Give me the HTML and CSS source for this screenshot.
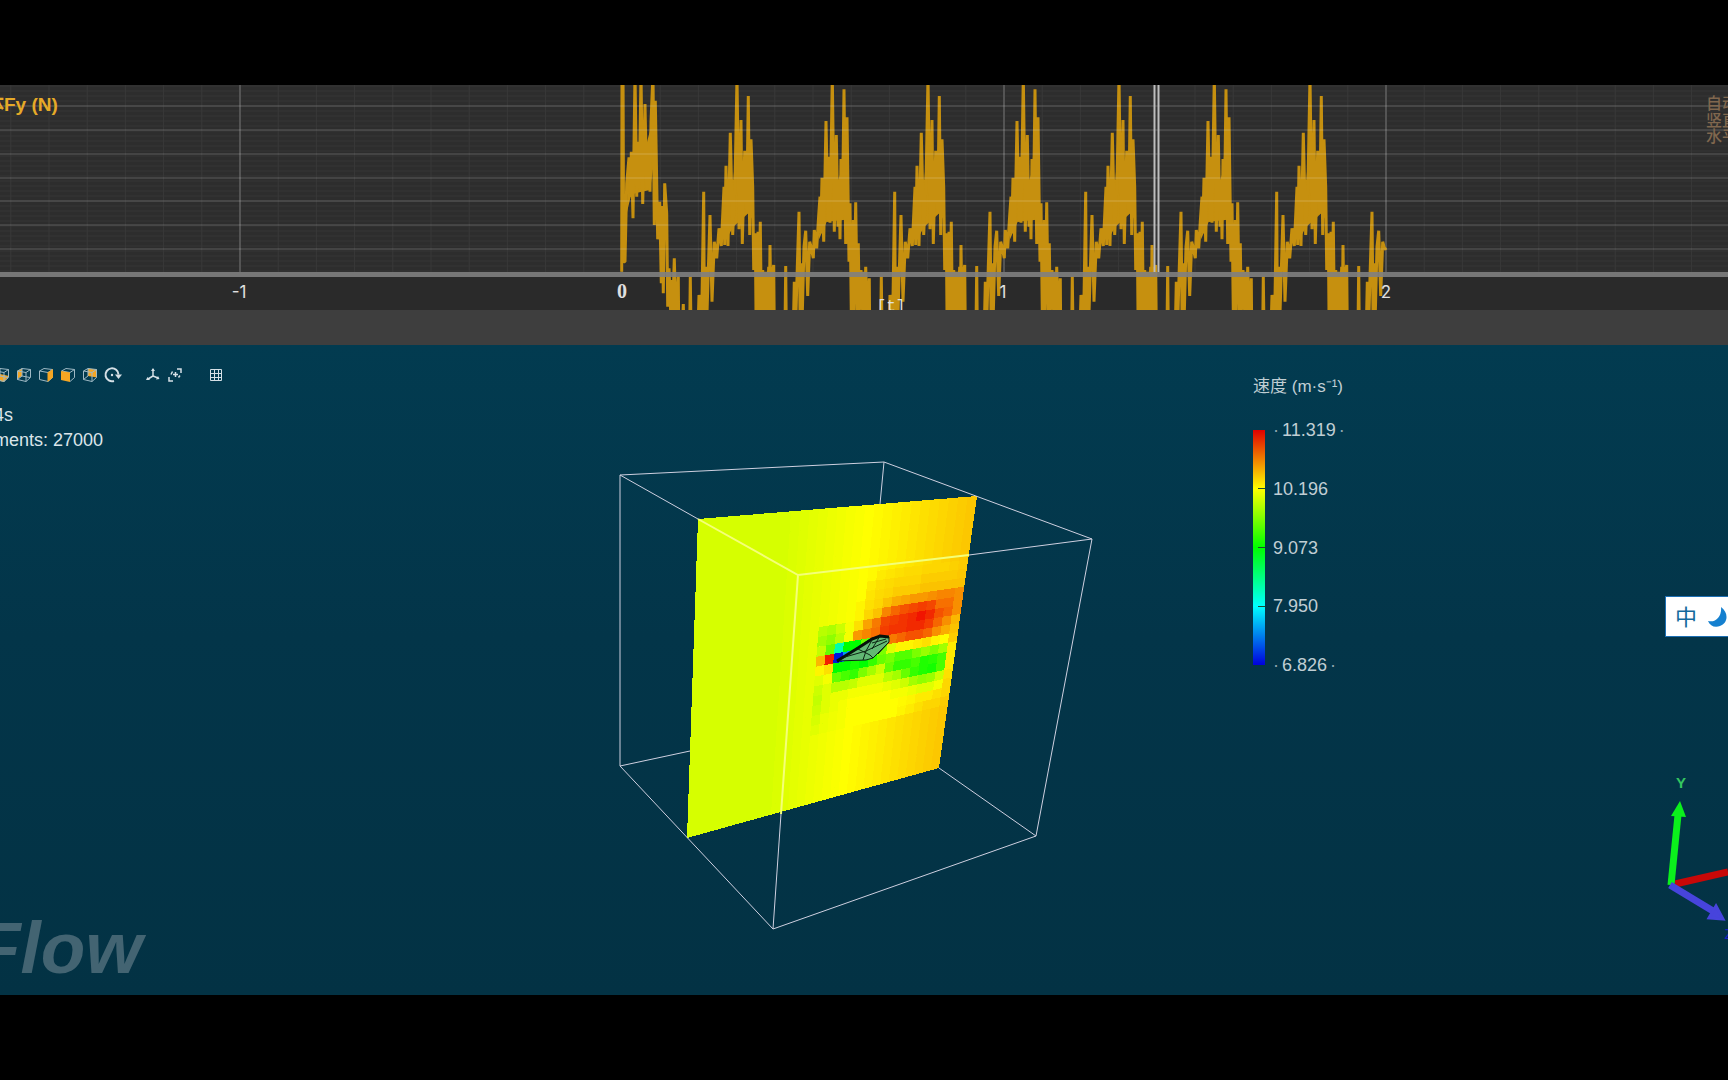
FILE: index.html
```html
<!DOCTYPE html>
<html lang="zh-CN">
<head>
<meta charset="utf-8">
<title>Flow – Fy (N)</title>
<link rel="stylesheet" href="styles.css">
</head>
<body>
<main class="app">
  <section class="plot" aria-label="Fy (N)">
    <svg class="plot-canvas" viewBox="0 0 1728 225">
      <defs>
        <pattern id="minor" width="8" height="5" patternUnits="userSpaceOnUse">
          <rect class="minor-row" width="8" height="2"/>
        </pattern>
      </defs>
      <rect class="plot-bg" width="1728" height="187"/>
      <rect width="1728" height="187" fill="url(#minor)"/>
      <rect class="axis-bg" y="187" width="1728" height="38"/>
      <g id="verticals"></g>
      <path id="body" class="trace-body" d=""/>
      <path id="trace" class="trace" d=""/>
      <g id="horizontals"></g>
      <rect class="axis-line" y="187" width="1728" height="5"/>
      <path class="cursor" d="M1154.5 0V187M1158.5 0V187"/>
      <text class="plot-title" x="-15" y="26">体Fy (N)</text>
      <g class="tick-label">
        <text x="239" y="213">-1</text>
        <text class="zero" x="622" y="213">0</text>
        <text x="1003" y="213">1</text>
        <text x="1386" y="213">2</text>
        <text class="unit" x="891" y="226">[t]</text>
      </g>
      <g class="plot-menu">
        <text x="1706" y="24">自动</text>
        <text x="1706" y="41">竖直</text>
        <text x="1706" y="57">水平</text>
      </g>
    </svg>
  </section>
  <div class="splitter"></div>

  <section class="view">
    <svg class="scene" viewBox="0 0 1728 650">
      <path class="edge" d="M884 117L880 159M620 421L690 406M939 423L1036 491"/>
      <g id="slice"></g>
      <path class="edge" d="M620 130L884 117L1092 194M1092 194L1036 491L773 584L620 421V130L698 174M969 210L1092 194M773 584L781 469"/>
      <path class="edge-over" d="M698 174L798 230L969 210M798 230L781 469"/>
      <g class="wing">
        <path class="wing-face" d="M837 316L872 293L881 291L889 292L889 297L873 313L866 315Z"/>
        <path class="wing-top" d="M837 316L858 303L872 294L880 291L889 292"/>
        <path class="wing-mesh" d="M845 312L866 306L887 296M858 304L870 310L873 313M866 306L863 315M866 306L872 295M872 298L886 294M878 309L889 297M880 291L872 304"/>
      </g>
      <g class="triad">
        <path class="axis-x" d="M1675 539L1728 527"/>
        <path class="axis-y" d="M1671 540L1678 470"/>
        <path class="tip-y" d="M1671 471L1680 456L1686 472Z"/>
        <path class="axis-z" d="M1670 540L1713 566"/>
        <path class="tip-z" d="M1716 561L1723 574L1709 573Z"/>
        <text class="label-y" x="1681" y="443">Y</text>
        <text class="label-z" x="1729" y="594">Z</text>
      </g>
    </svg>

    <div class="overlay">
      <div class="left">
        <div class="toolbar" role="toolbar">
          <div class="group">
            <button aria-label="Bottom"><svg viewBox="0 0 16 16"><path class="fill" d="M1 9L6 7L15 9L10 15L1 13Z"/><path class="cube" d="M1.500 4L6 1.500L14.500 2.500L10 5.500ZM1.500 4V12.500L10 14.500L14.500 10.500V2.500M10 5.500V14.500M6 1.500V9L1.500 12.500M6 9L14 10.500"/></svg></button>
            <button aria-label="Left"><svg viewBox="0 0 16 16"><path class="fill" d="M1 4L6 1.500V9L1 12Z"/><path class="cube" d="M1.500 4L6 1.500L14.500 2.500L10 5.500ZM1.500 4V12.500L10 14.500L14.500 10.500V2.500M10 5.500V14.500M6 1.500V9L1.500 12.500M6 9L14 10.500"/></svg></button>
            <button aria-label="Right"><svg viewBox="0 0 16 16"><path class="cube" d="M1.500 4L6 1.500L14.500 2.500L10 5.500ZM1.500 4V12.500L10 14.500L14.500 10.500V2.500"/><path class="fill" d="M9.500 5.500L15 2V10.500L9.500 15Z"/></svg></button>
            <button aria-label="Front"><svg viewBox="0 0 16 16"><path class="cube" d="M1.500 4L6 1.500L14.500 2.500L10 5.500ZM10 14.500L14.500 10.500V2.500"/><path class="fill" d="M1 4L10 5.500V15L1 13Z"/></svg></button>
            <button aria-label="Back"><svg viewBox="0 0 16 16"><path class="fill" d="M6 1.500L15 2.500V10.500L6 9Z"/><path class="cube" d="M1.500 4L6 1.500L14.500 2.500L10 5.500ZM1.500 4V12.500L10 14.500L14.500 10.500V2.500M10 5.500V14.500M6 1.500V9L1.500 12.500"/></svg></button>
            <button aria-label="Rotate"><svg viewBox="0 0 16 16"><path class="line bold" d="M10 14A6.500 6.500 0 1 1 14.500 7.500"/><path class="solid" d="M11 7.500H18L14.500 12Z"/><circle class="solid" cx="8" cy="8" r="1.200"/></svg></button>
          </div>
          <div class="group">
            <button aria-label="Axes"><svg viewBox="0 0 16 16"><path class="line" d="M8 2V9L3 12M8 9L13 11"/><path class="solid" d="M6 4L8 1L10 4ZM1 13L2.500 10L5 13ZM14.500 12L11 12.500L13 9Z"/></svg></button>
            <button aria-label="Fit"><svg viewBox="0 0 16 16"><path class="line" d="M10 2H14V6M2 10V14H6M8.500 5V10M6 7.500H11M11.500 10.500L13 8.500M4 7.500L5.500 4.500"/></svg></button>
          </div>
          <div class="group">
            <button aria-label="Grid"><svg viewBox="0 0 16 16"><path class="line thin" d="M2.500 2.500H13.500V13.500H2.500ZM6.500 2V14M10.500 2V14M2 6.500H14M2 10.500H14"/></svg></button>
          </div>
        </div>
        <div class="readout">
          <p>4s</p>
          <p>ments: 27000</p>
        </div>
        <div class="brand">Flow</div>
      </div>

      <div class="legend">
        <h2>速度 (m·s⁻¹)</h2>
        <div class="scale">
          <div class="bar"><i></i><i></i><i></i></div>
          <ul>
            <li><span>·</span>11.319<span>·</span></li>
            <li>10.196</li>
            <li>9.073</li>
            <li>7.950</li>
            <li><span>·</span>6.826<span>·</span></li>
          </ul>
        </div>
      </div>

      <button class="ime" aria-label="中文输入">
        <span>中</span>
        <svg viewBox="0 0 22 22"><path d="M14 1C22 7 21 17 13 20C8 22 3 20 1 15C9 17 15 10 14 1Z"/></svg>
      </button>
    </div>
  </section>
</main>
<script src="script.js"></script>
</body>
</html>
```

FILE: styles.css
```css
* { box-sizing: border-box; }

body {
  margin: 0;
  min-height: 100vh;
  display: flex;
  flex-direction: column;
  justify-content: center;
  overflow-x: hidden;
  background: #000;
  font-family: "Liberation Sans", "Noto Sans CJK SC", sans-serif;
}

button { margin: 0; padding: 0; border: 0; background: none; font: inherit; }

.app { width: 100%; overflow: hidden; }

/* force plot */
.plot-canvas { display: block; width: 100%; }
.plot-bg { fill: #2d2d2d; }
.minor-row { fill: #313131; }
.axis-bg { fill: #2a2a2a; }
.axis-line { fill: #808080; fill-opacity: .9; }
.grid-v { stroke: #393939; stroke-width: 1; }
.grid-v.major { stroke: #545454; stroke-width: 2; }
.grid-h { stroke: #fff; stroke-opacity: .11; stroke-width: 2; }
.trace { fill: none; stroke: #c6900f; stroke-width: 3; stroke-linejoin: bevel; }
.trace-body { fill: #c6900f; }
.cursor { stroke: #bdbdbd; stroke-width: 2; }
.plot-title {
  font: bold 19px "Liberation Sans", "Noto Sans CJK SC", sans-serif;
  fill: #e6aa28;
}
.tick-label { font: 17px Inter, sans-serif; fill: #e0e0e0; text-anchor: middle; }
.tick-label .zero { font: bold 20px "Liberation Serif", serif; }
.tick-label .unit { font: 16px "Liberation Mono", monospace; }
.plot-menu { font: 500 16px "Noto Sans CJK SC", sans-serif; fill: #80674e; }

.splitter { height: 35px; background: #3e3e3e; }

/* 3D view */
.view {
  position: relative;
  background: linear-gradient(#023b50, #033549 45%, #033244);
}
.scene { display: block; width: 100%; }
.edge { fill: none; stroke: #cfd0e0; stroke-width: 1; }
.edge-over { fill: none; stroke: #f4ff78; stroke-width: 2; }
.wing-face { fill: #62b874; stroke: #0c2413; stroke-width: 1; }
.wing-top { fill: none; stroke: #06120a; stroke-width: 3; }
.wing-mesh { fill: none; stroke: #0c2413; stroke-width: 1; }
.axis-x { stroke: #c80808; stroke-width: 7; }
.axis-y { stroke: #0bf01c; stroke-width: 7; }
.axis-z { stroke: #4744dc; stroke-width: 7; }
.tip-y { fill: #0bf01c; }
.tip-z { fill: #4744dc; stroke: #4744dc; stroke-width: 3; }
.label-y { font: bold 15px "Liberation Sans", sans-serif; fill: #35c660; text-anchor: middle; }
.label-z { font: 15px "Liberation Sans", sans-serif; fill: #1a20c8; text-anchor: middle; }

.overlay {
  position: absolute;
  inset: 0;
  display: grid;
  grid-template-columns: 1253fr 412fr 63fr;
}

.left { display: flex; flex-direction: column; padding-top: 19px; }
.toolbar { display: flex; gap: 19px; margin-left: -9px; }
.group { display: flex; }
.group button { width: 22px; height: 22px; display: grid; place-items: center; }
.group svg { width: 16px; height: 16px; overflow: visible; }
.cube { fill: none; stroke: #9fb9c4; stroke-width: 1; }
.fill { fill: #f5a623; }
.line { fill: none; stroke: #d5e0e6; stroke-width: 1.500; }
.line.bold { stroke-width: 2; }
.line.thin { stroke-width: 1; }
.solid { fill: #d5e0e6; }

.readout { margin: 17px 0 0 -6px; color: #dbe5ea; font-size: 18px; line-height: 25px; }
.readout p { margin: 0; }

.brand {
  margin: auto 0 9px -24px;
  color: #436472;
  font-size: 73px;
  font-weight: bold;
  font-style: italic;
  line-height: 76px;
}

.legend { padding-top: 30px; color: #c0ced4; }
.legend h2 { margin: 0; font-size: 17px; font-weight: normal; line-height: 24px; }
.scale { display: flex; gap: 8px; margin-top: 21px; }
.bar {
  width: 12px;
  height: 235px;
  margin-top: 10px;
  display: flex;
  flex-direction: column;
  justify-content: space-evenly;
  align-items: flex-end;
  background: linear-gradient(#e00000, #ff0 25%, #0f0 50%, #0ff 75%, #00d);
}
.bar i { width: 7px; height: 1px; background: #1d4a30; }
.scale ul {
  height: 255px;
  margin: 0;
  padding: 0;
  list-style: none;
  display: flex;
  flex-direction: column;
  justify-content: space-between;
  font-size: 18px;
  line-height: 20px;
}
.scale li span { display: inline-block; width: 9px; color: #8fa6b0; }
.scale li span:last-child { text-align: right; }

.ime {
  height: 41px;
  margin-top: 251px;
  padding-left: 9px;
  display: flex;
  align-items: center;
  gap: 10px;
  overflow: hidden;
  border: 1px solid #1c6fb4;
  border-right: 0;
  background: #fff;
  color: #14699c;
  font-family: "Noto Sans CJK SC", sans-serif;
  font-size: 22px;
  line-height: 36px;
}
.ime span { height: 39px; }
.ime svg { flex: none; width: 22px; height: 22px; fill: #1580cf; }
```

FILE: script.js
```javascript
const NS = 'http://www.w3.org/2000/svg';
function add(parent, name, attrs) {
  const el = document.createElementNS(NS, name);
  for (const key in attrs) el.setAttribute(key, attrs[key]);
  parent.appendChild(el);
}

// Grid of the force plot: ten divisions per time unit.
const verticals = document.getElementById('verticals');
for (let k = -16; k <= 29; k++) {
  const x = 622 + k * 38.2;
  add(verticals, 'line', { x1: x, x2: x, y1: 0, y2: 187, class: k % 10 ? 'grid-v' : 'grid-v major' });
}
const horizontals = document.getElementById('horizontals');
for (const y of [21, 45, 69, 93, 116, 140, 164]) {
  add(horizontals, 'line', { x1: 0, x2: 1728, y1: y, y2: y, class: 'grid-h' });
}

// Force samples in thirds of a unit: start-up stroke, then two alternating strokes.
const start = [65,575, 66,-50, 69,-50, 71,545, 75,545, 80,310, 87,232, 92,350, 94,215, 99,415, 105,-20, 110,350, 113,185, 118,325, 123,-20, 128,372, 135,72, 140,330, 144,190, 150,335, 153,125, 159,-20, 163,435, 166,62, 173,478, 179,365, 184,610, 187,378, 190,640, 194,310, 200,400, 203,680, 207,565, 212,700, 216,600, 218,700, 223,535, 227,700, 235,590, 236,750, 247,750, 250,672, 252,750, 269,750, 271,590, 273,750];
const strokeA = [294,750, 297,645, 303,700, 306,655, 311,335, 313,700, 319,560, 321,700, 330,405, 336,665, 343,485, 350,535, 357,445, 364,498, 372,320, 374,495, 378,257, 384,498, 391,158, 398,465, 405,310, 411,-10, 417,448, 423,120, 427,492, 434,212, 440,400, 445,48, 449,465, 453,178, 458,320, 461,570, 466,460, 468,700, 474,455, 476,700, 481,425, 484,700, 488,570, 492,700, 497,575, 501,700, 506,560, 508,700, 510,495, 513,700, 518,575, 521,555, 523,750, 555,750, 557,558, 559,750];
const strokeB = [580,750, 583,605, 588,700, 592,560, 597,395, 600,700, 605,550, 607,700, 612,500, 617,452, 623,648, 629,485, 633,500, 640,535, 643,450, 650,505, 656,405, 660,350, 662,460, 666,293, 671,485, 678,123, 684,425, 686,230, 690,428, 697,-10, 703,455, 709,165, 714,440, 717,300, 720,478, 723,237, 727,420, 732,28, 737,492, 741,112, 747,545, 750,370, 754,700, 760,420, 762,700, 767,367, 772,700, 775,490, 778,700, 783,570, 788,700, 792,575, 794,700, 797,560, 801,700, 808,595, 809,750, 842,750, 844,590, 846,750];
// Dense core of each stroke, where neighbouring samples merge.
const coreStart = [80,400, 84,300, 92,290, 104,190, 140,190, 158,120, 168,150, 172,440, 160,260, 150,330, 105,340, 92,350];
const coreA = [372,490, 378,350, 389,290, 400,300, 408,200, 416,270, 428,290, 436,250, 446,180, 454,220, 459,420, 445,400, 400,440];
const coreB = [656,480, 664,350, 676,280, 684,280, 694,200, 703,290, 714,300, 722,280, 732,150, 742,180, 746,400, 730,420, 680,425];

function place(x, y, shift) {
  return (600 + (x + shift) / 3).toFixed(1) + ' ' + (y / 3 - 5).toFixed(1);
}
const points = [];
const cores = [];
function put(list, shift, limit) {
  for (let i = 0; i < list.length; i += 2) {
    if (limit && list[i] > limit) break;
    points.push(place(list[i], list[i + 1], shift));
  }
}
function putCore(list, shift) {
  const outline = [];
  for (let i = 0; i < list.length; i += 2) outline.push(place(list[i], list[i + 1], shift));
  cores.push('M' + outline.join('L') + 'Z');
}
put(start, 0);
putCore(coreStart, 0);
for (let n = 0; n < 4; n++) {
  put(strokeA, n * 573);
  putCore(coreA, n * 573);
  put(strokeB, n * 573, n === 3 ? 634 : 0);
  if (n < 3) putCore(coreB, n * 573);
}
points.push('1386 165');
document.getElementById('trace').setAttribute('d', 'M' + points.join('L'));
document.getElementById('body').setAttribute('d', cores.join(''));

// Velocity slice: 30 x 30 cells between the four corners.
const cells = {
  7: [20, .77, .775, .78, .785, .785, .79, .79, .79, .795, .8],
  8: [19, .77, .78, .785, .79, .79, .79, .8, .8, .8, .8, .805],
  9: [19, .775, .785, .79, .8, .8, .8, .81, .81, .81, .81, .81],
  10: [18, .76, .78, .79, .81, .83, .84, .85, .85, .86, .87, .87, .86],
  11: [18, .76, .79, .81, .87, .90, .92, .93, .94, .93, .89, .89, .86],
  12: [14, .68, .67, .70, .74, .78, .84, .88, .93, .94, .95, .96, .98, .96, .92, .90, .86],
  13: [14, .66, .64, .68, .74, .85, .87, .89, .94, .95, .95, .96, .96, .94, .90, .86, .82],
  14: [14, .69, .60, .33, .5, .5, .6, .88, .90, .88, .90, .92, .92, .90, .86, .83, .81],
  15: [14, .82, .97, .02, .15, .5, .5, .52, .62, .72, .76, .76, .77, .78, .76, .75, .80],
  16: [14, .76, .78, .5, .5, .52, .5, .55, .60, .62, .58, .58, .62, .65, .62, .66, .77],
  17: [14, .72, .74, .6, .57, .55, .62, .66, .70, .60, .55, .55, .57, .53, .54, .57, .77],
  18: [14, .70, .72, .68, .68, .69, .72, .72, .72, .68, .66, .6, .55, .53, .52, .57, .77],
  19: [14, .69, .72, .73, .73, .74, .74, .74, .74, .73, .72, .7, .66, .64, .65, .70, .78],
  20: [14, .70, .72, .73, .74, .75, .75, .75, .75, .75, .74, .74, .73, .72, .72, .74, .79],
  21: [14, .71, .73, .735, .74, .75, .75, .75, .75, .75, .75, .755, .76, .77, .77, .78, .79],
  22: [14, .72, .73, .735, .74, .75, .75, .75, .75, .75, .75, .76, .77, .78, .79, .79, .8]
};
function base(c) {
  if (c < 9) return .71;
  if (c < 18) return .71 + (c - 9) * .0044;
  return .75 + (c - 18) * .005;
}
function color(t) {
  const stops = [[0, 0, 220], [0, 255, 255], [0, 255, 0], [255, 255, 0], [240, 0, 0]];
  const i = Math.min(3, Math.floor(t * 4));
  const f = t * 4 - i;
  return 'rgb(' + stops[i].map((v, k) => Math.round(v + (stops[i + 1][k] - v) * f)).join(',') + ')';
}
const corners = [[698, 174], [977, 151], [939, 423], [687, 493]];
const n = 30;
function at(c, r) {
  const u = c / n;
  const v = r / n;
  return [0, 1].map(k => (
    (corners[0][k] * (1 - u) + corners[1][k] * u) * (1 - v) +
    (corners[3][k] * (1 - u) + corners[2][k] * u) * v).toFixed(1)).join(' ');
}
const slice = document.getElementById('slice');
for (let r = 0; r < n; r++) {
  for (let c = 0; c < n; c++) {
    const row = cells[r];
    const known = row && c >= row[0] ? row[c - row[0] + 1] : undefined;
    // Each cell runs under its right and lower neighbours so that no seam shows.
    const right = Math.min(n, c + 1.5);
    const low = Math.min(n, r + 1.5);
    add(slice, 'path', {
      d: 'M' + [at(c, r), at(right, r), at(right, low), at(c, low)].join('L') + 'Z',
      fill: color(known === undefined ? base(c) : known),
      'shape-rendering': 'crispEdges'
    });
  }
}
```
